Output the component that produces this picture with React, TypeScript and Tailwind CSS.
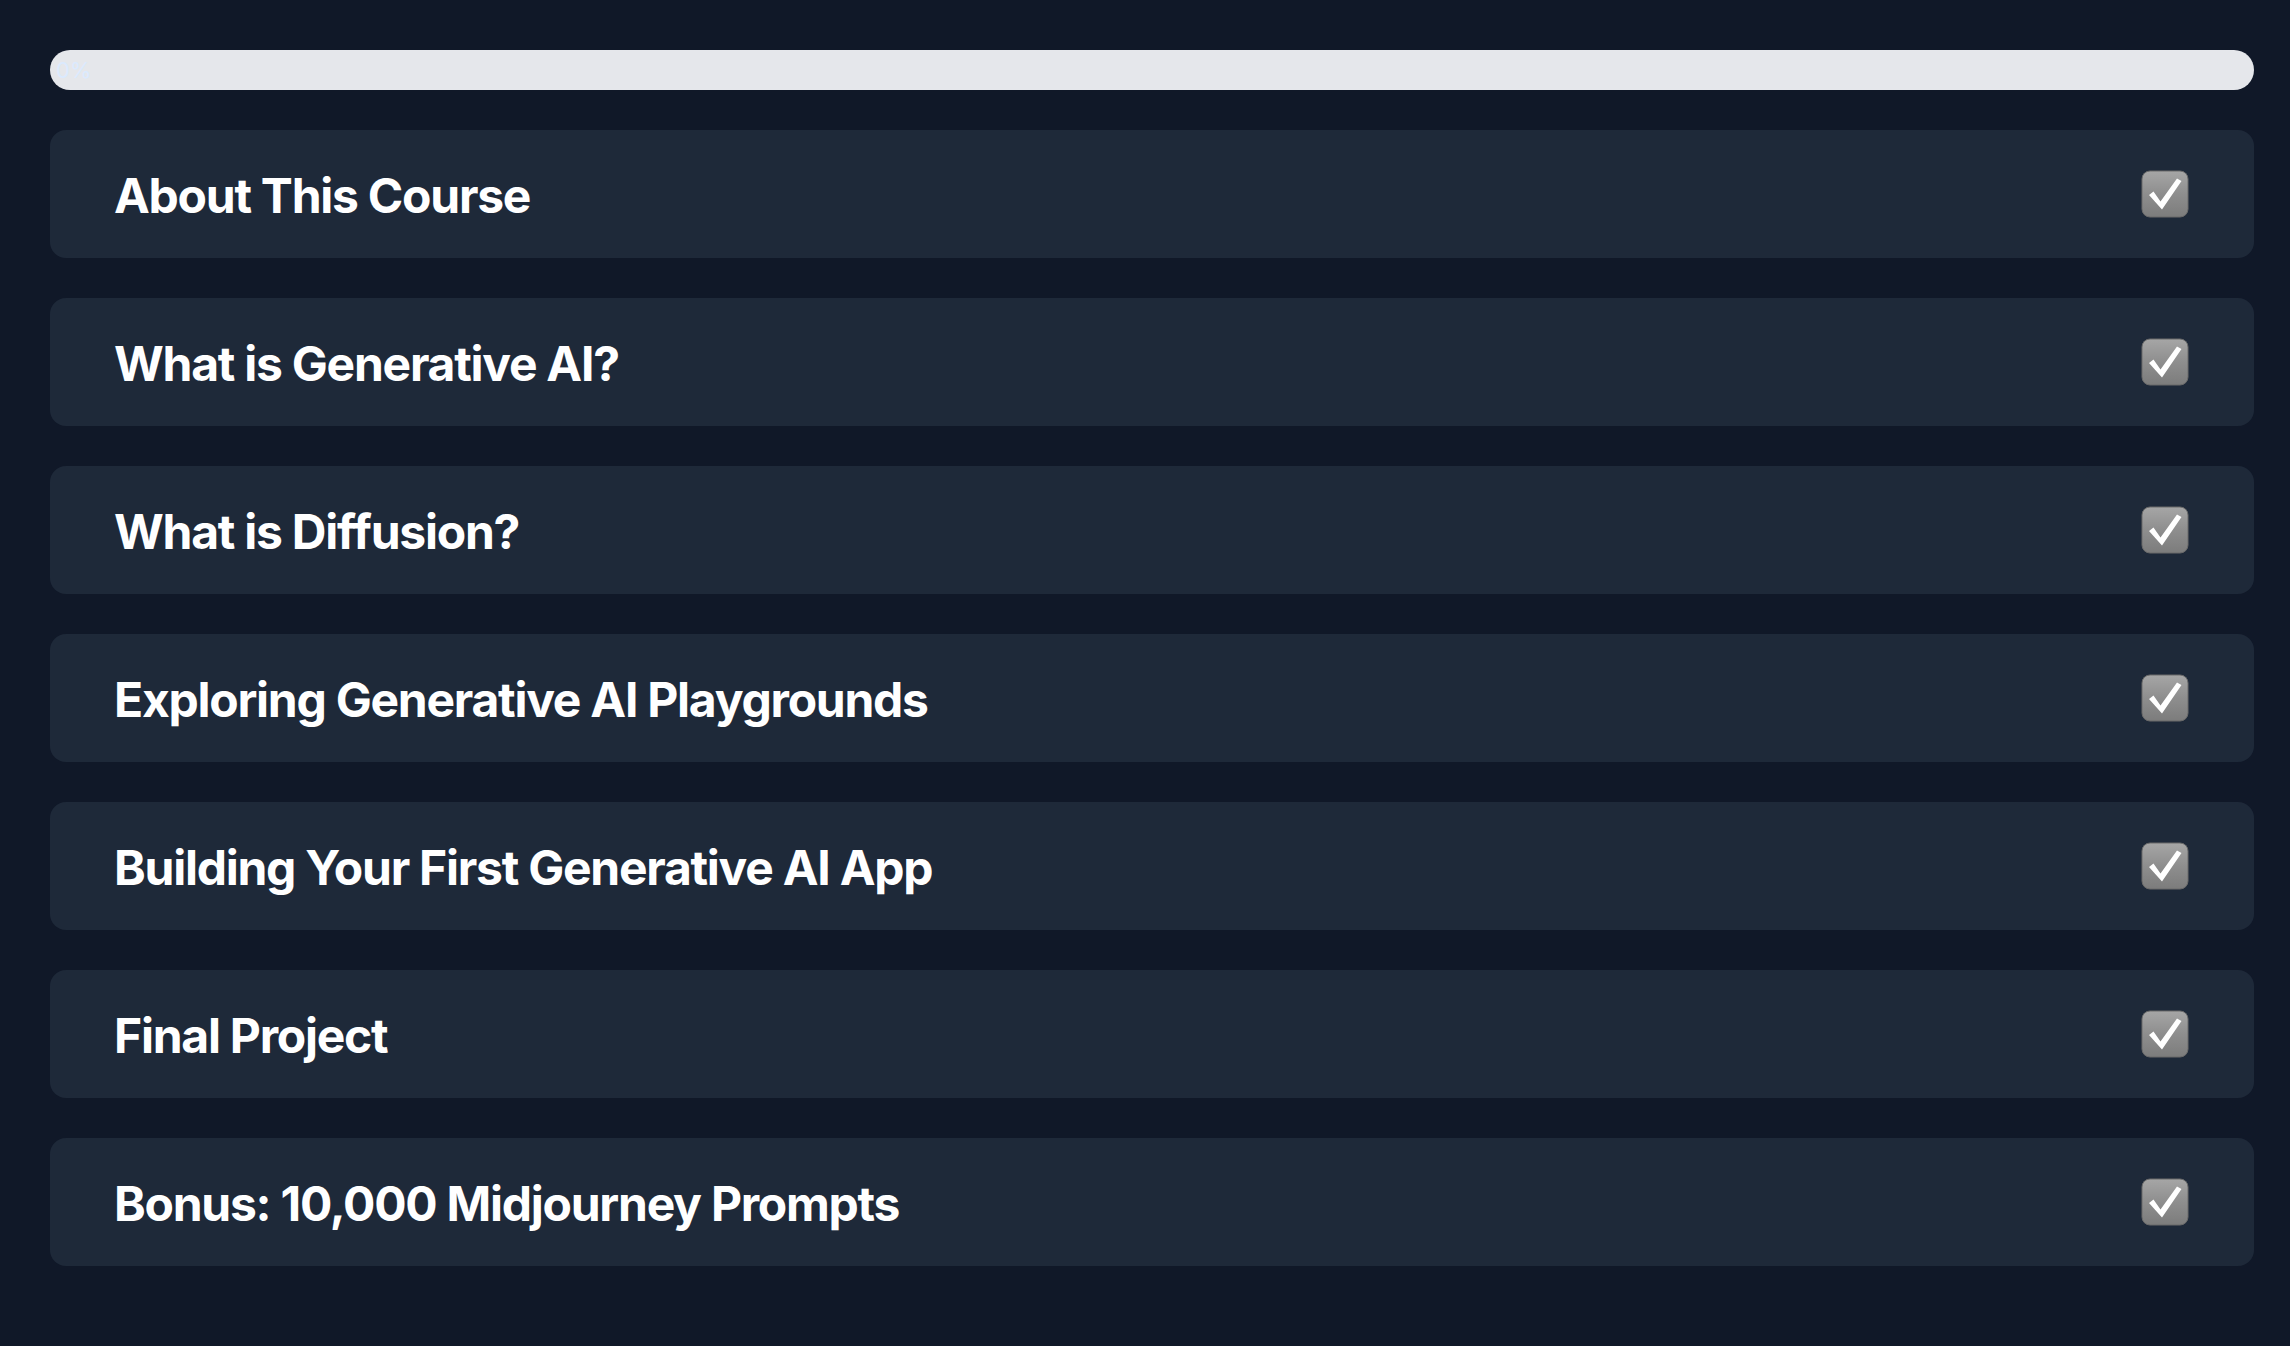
import React from 'react';

const lessons = [
  'About This Course',
  'What is Generative AI?',
  'What is Diffusion?',
  'Exploring Generative AI Playgrounds',
  'Building Your First Generative AI App',
  'Final Project',
  'Bonus: 10,000 Midjourney Prompts',
];

// Apple-style "☑️" box, drawn since no colour emoji font is available
function CheckBox() {
  return (
    <svg width="48" height="48" viewBox="0 0 48 48" className="shrink-0">
      <defs>
        <linearGradient id="cbg" x1="0" y1="0" x2="0" y2="1">
          <stop offset="0" stopColor="#a6a6a6" />
          <stop offset="0.5" stopColor="#8e8e8e" />
          <stop offset="1" stopColor="#7c7c7c" />
        </linearGradient>
      </defs>
      <rect x="1" y="1" width="46" height="46" rx="8" fill="url(#cbg)" stroke="#6a6a6a" strokeWidth="1" />
      <path d="M8 25 L12.5 21.5 L19.5 31.5 L36 8.5 L40.5 11 L21 39.5 Z" fill="#ffffff" />
    </svg>
  );
}

function LessonRow({ title }: { title: string }) {
  return (
    <div className="flex h-[128px] items-center justify-between rounded-2xl bg-gray-800 pl-[64px] pr-[65px]">
      <h2 className="pt-[3px] text-[48px] font-bold leading-none tracking-[-0.026em] text-white">{title}</h2>
      <CheckBox />
    </div>
  );
}

export default function App() {
  return (
    <div className="min-h-screen w-full bg-gray-900 pb-[80px] pl-[50px] pr-[36px] pt-[50px] font-['Inter','Noto_Sans',sans-serif]">
      {/* progress bar */}
      <div className="h-[40px] w-full overflow-hidden rounded-full bg-gray-200">
        <div className="flex h-full w-0 items-center pl-[6px] text-[22px] leading-none text-blue-100">0%</div>
      </div>

      <div className="mt-[40px] flex flex-col gap-[40px]">
        {lessons.map((t) => (
          <LessonRow key={t} title={t} />
        ))}
      </div>
    </div>
  );
}
